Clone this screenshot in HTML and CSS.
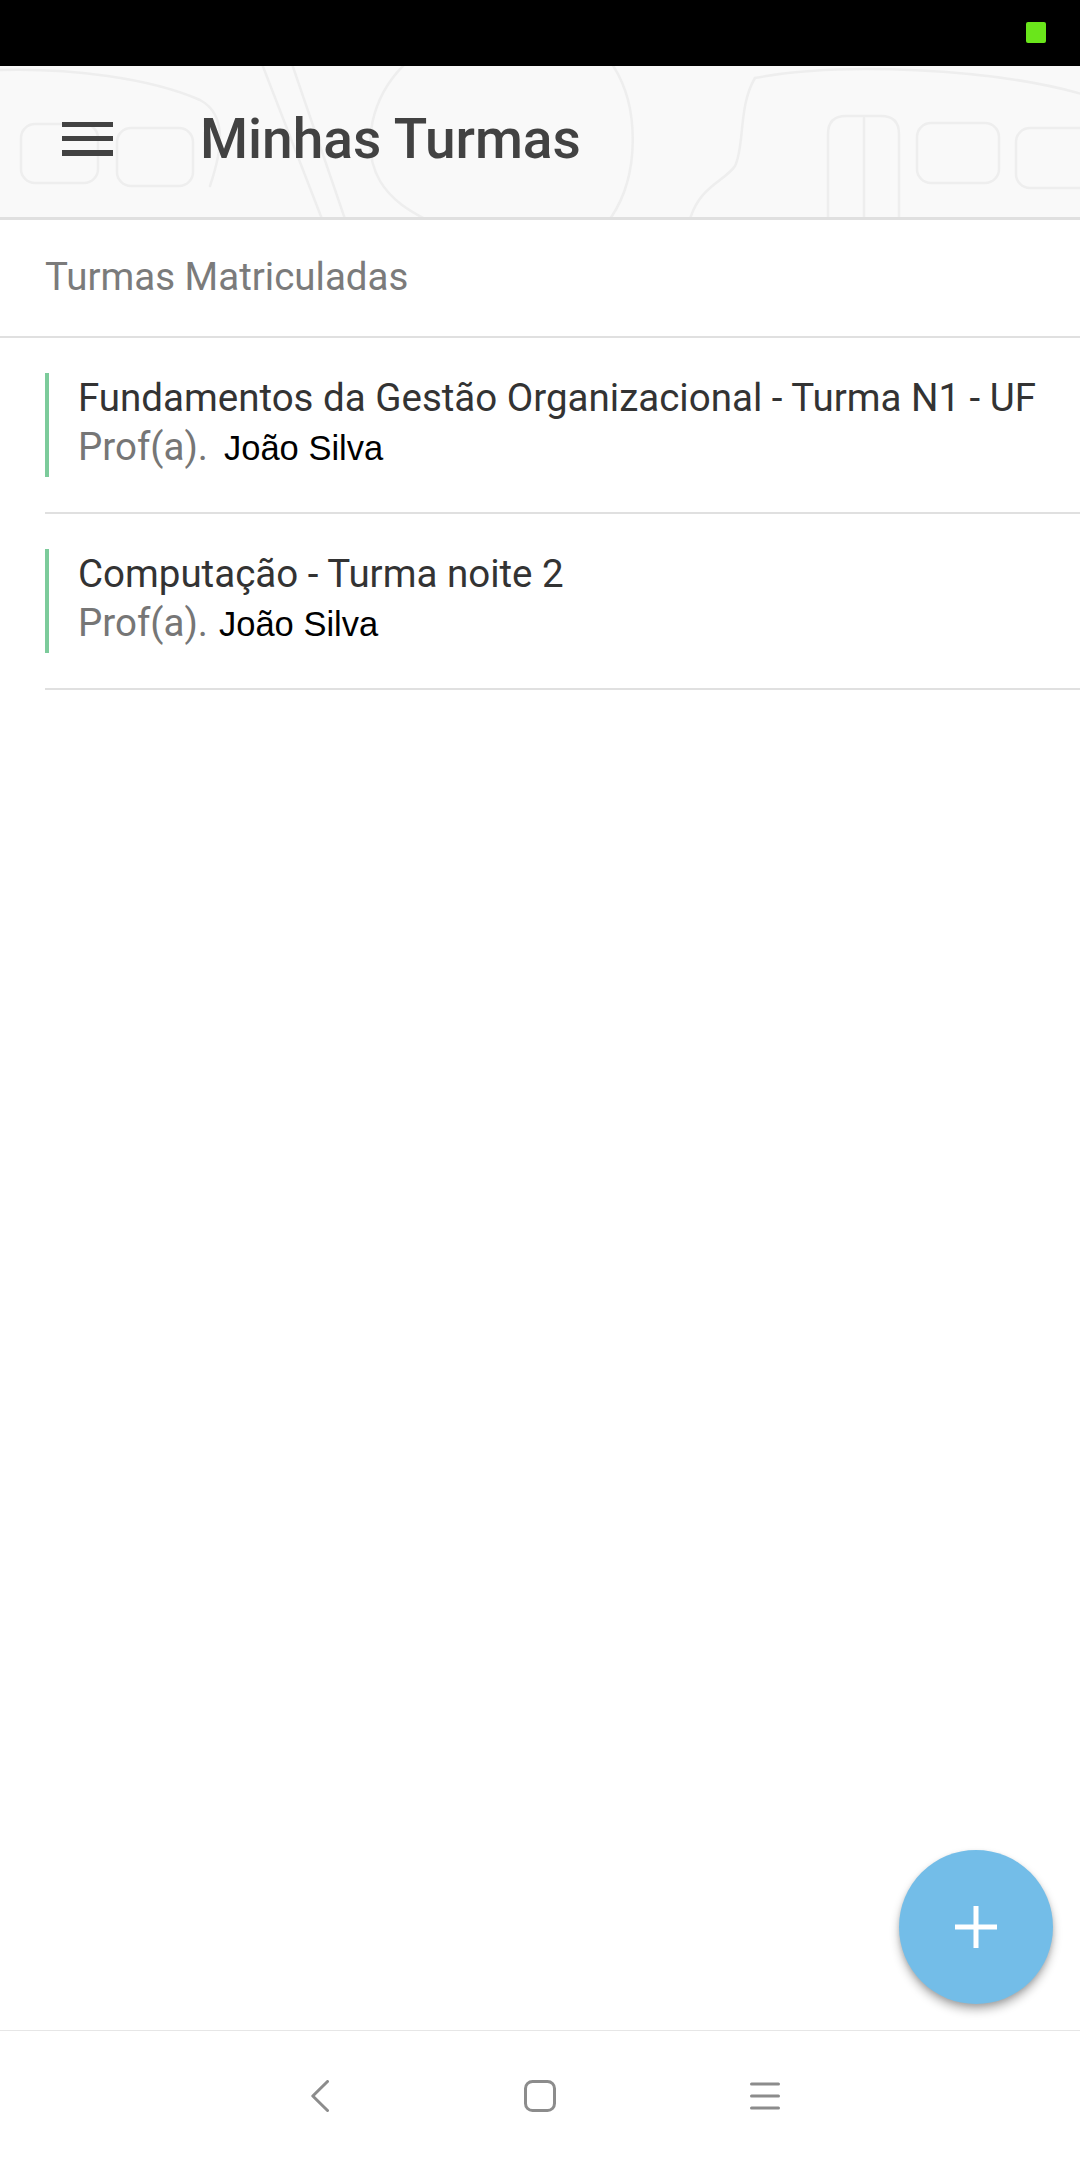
FILE: index.html
```html
<!DOCTYPE html>
<html lang="pt">
<head>
<meta charset="utf-8">
<title>Minhas Turmas</title>
<link rel="stylesheet" href="styles.css">
</head>
<body>
<div class="screen">
  <div class="statusbar">
    <span class="status-dot"></span>
  </div>

  <header class="appbar">
    <svg class="appbar-pattern" viewBox="0 0 1080 151" preserveAspectRatio="none" aria-hidden="true">
      <g fill="none" stroke="#eeeeee" stroke-width="2.5" stroke-linecap="round">
        <rect x="21" y="58" width="77" height="59" rx="14"/>
        <rect x="117" y="62" width="76" height="58" rx="14"/>
        <path d="M0 4 C70 2 150 12 200 34 C230 50 220 90 210 120"/>
        <path d="M262 -2 L322 153"/>
        <path d="M292 -2 L345 153"/>
        <path d="M405 -2 C372 30 360 80 380 115 C392 135 410 145 425 153"/>
        <path d="M612 -2 C640 40 640 110 610 153"/>
        <path d="M755 12 C840 -4 990 2 1082 28"/>
        <path d="M755 12 C738 40 745 80 735 100 C725 115 700 120 690 153"/>
        <path d="M828 153 L828 68 Q828 50 846 50 L881 50 Q899 50 899 68 L899 153"/>
        <path d="M864 52 L864 153"/>
        <rect x="917" y="57" width="82" height="60" rx="14"/>
        <rect x="1016" y="62" width="90" height="60" rx="14"/>
      </g>
    </svg>
    <div class="menu-icon" aria-label="Menu">
      <span></span><span></span><span></span>
    </div>
    <h1 class="appbar-title">Minhas Turmas</h1>
  </header>

  <main class="content">
    <div class="section-header">Turmas Matriculadas</div>
    <ul class="class-list">
      <li class="class-item">
        <div class="class-card">
          <div class="class-name">Fundamentos da Gestão Organizacional - Turma N1 - UF</div>
          <div class="class-prof"><span class="prof-label">Prof(a).</span><span class="prof-name prof-name-wide">João Silva</span></div>
        </div>
      </li>
      <li class="class-item">
        <div class="class-card">
          <div class="class-name">Computação - Turma noite 2</div>
          <div class="class-prof"><span class="prof-label">Prof(a).</span><span class="prof-name">João Silva</span></div>
        </div>
      </li>
    </ul>
  </main>

  <button class="fab" aria-label="Adicionar">
    <svg width="42" height="42" viewBox="0 0 42 42"><path d="M21 0 V42 M0 21 H42" stroke="#ffffff" stroke-width="5"/></svg>
  </button>

  <nav class="navbar">
    <svg class="nav-back" width="18" height="32" viewBox="0 0 18 32"><polyline points="16.5,1.5 1.8,16 16.5,30.5" fill="none" stroke="#8c8c8c" stroke-width="3" stroke-linecap="round" stroke-linejoin="round"/></svg>
    <svg class="nav-home" width="32" height="32" viewBox="0 0 32 32"><rect x="1.5" y="1.5" width="29" height="29" rx="7" fill="none" stroke="#8c8c8c" stroke-width="3"/></svg>
    <svg class="nav-menu" width="30" height="28" viewBox="0 0 30 28"><path d="M1.5 2 H28.5 M1.5 14 H28.5 M1.5 26 H28.5" stroke="#8c8c8c" stroke-width="3" stroke-linecap="round"/></svg>
  </nav>
</div>
</body>
</html>
```

FILE: styles.css
```css
* { box-sizing: border-box; }

html, body {
  margin: 0;
  padding: 0;
  background: #ffffff;
}

body {
  font-family: Roboto, "Noto Sans", "Liberation Sans", sans-serif;
}

.screen {
  position: relative;
  width: 1080px;
  height: 2160px;
  display: flex;
  flex-direction: column;
  overflow: hidden;
  background: #ffffff;
}

.statusbar {
  height: 66px;
  background: #000000;
  display: flex;
  justify-content: flex-end;
  align-items: flex-start;
  padding: 22px 34px 0 0;
  flex: none;
}

.status-dot {
  width: 20px;
  height: 21px;
  background: #6ae61b;
  border-radius: 2px;
}

.appbar {
  position: relative;
  height: 154px;
  flex: none;
  background: #f9f9f9;
  border-bottom: 3px solid #e0e0e0;
  display: flex;
  align-items: center;
  padding: 0 0 4px 62px;
}

.appbar-pattern {
  position: absolute;
  left: 0;
  top: 0;
  width: 1080px;
  height: 151px;
}

.menu-icon {
  position: relative;
  width: 51px;
  height: 34px;
  display: flex;
  flex-direction: column;
  justify-content: space-between;
  margin-top: -2px;
}

.menu-icon span {
  display: block;
  height: 5.5px;
  background: #424242;
}

.appbar-title {
  position: relative;
  margin: 0 0 0 87px;
  font-size: 55px;
  font-weight: 500;
  color: #424242;
  letter-spacing: 0;
  line-height: 1;
}

.content {
  flex: 1;
}

.section-header {
  height: 118px;
  border-bottom: 2px solid #e0e0e0;
  padding: 32px 0 0 45px;
  font-size: 38.5px;
  line-height: 49px;
  color: #7b7b7b;
}

.class-list {
  list-style: none;
  margin: 0;
  padding: 0 0 0 45px;
}

.class-item {
  padding: 35px 0;
  border-bottom: 2px solid #e0e0e0;
}

.class-card {
  border-left: 4px solid #7ccb9b;
  padding: 0 0 0 29px;
  height: 104px;
}

.class-name {
  font-size: 38.5px;
  line-height: 49px;
  color: #333333;
  white-space: nowrap;
}

.class-prof {
  font-size: 38.5px;
  line-height: 49px;
  white-space: nowrap;
}

.prof-label {
  color: #767676;
}

.prof-name {
  font-family: "Liberation Sans", Arial, sans-serif;
  font-size: 34.5px;
  color: #000000;
  margin-left: 11px;
}

.prof-name-wide {
  margin-left: 16px;
}

.fab {
  position: absolute;
  right: 27px;
  bottom: 156px;
  width: 154px;
  height: 154px;
  border-radius: 50%;
  border: none;
  padding: 0;
  background: #73bde8;
  box-shadow: 0 6px 10px rgba(0, 0, 0, 0.28), 0 2px 4px rgba(0, 0, 0, 0.12);
  display: flex;
  align-items: center;
  justify-content: center;
}

.navbar {
  height: 130px;
  flex: none;
  border-top: 1px solid #e6e6e6;
  background: #ffffff;
  display: flex;
  align-items: center;
  padding-left: 311px;
}

.nav-home {
  margin-left: 195px;
}

.nav-menu {
  margin-left: 194px;
}
```
